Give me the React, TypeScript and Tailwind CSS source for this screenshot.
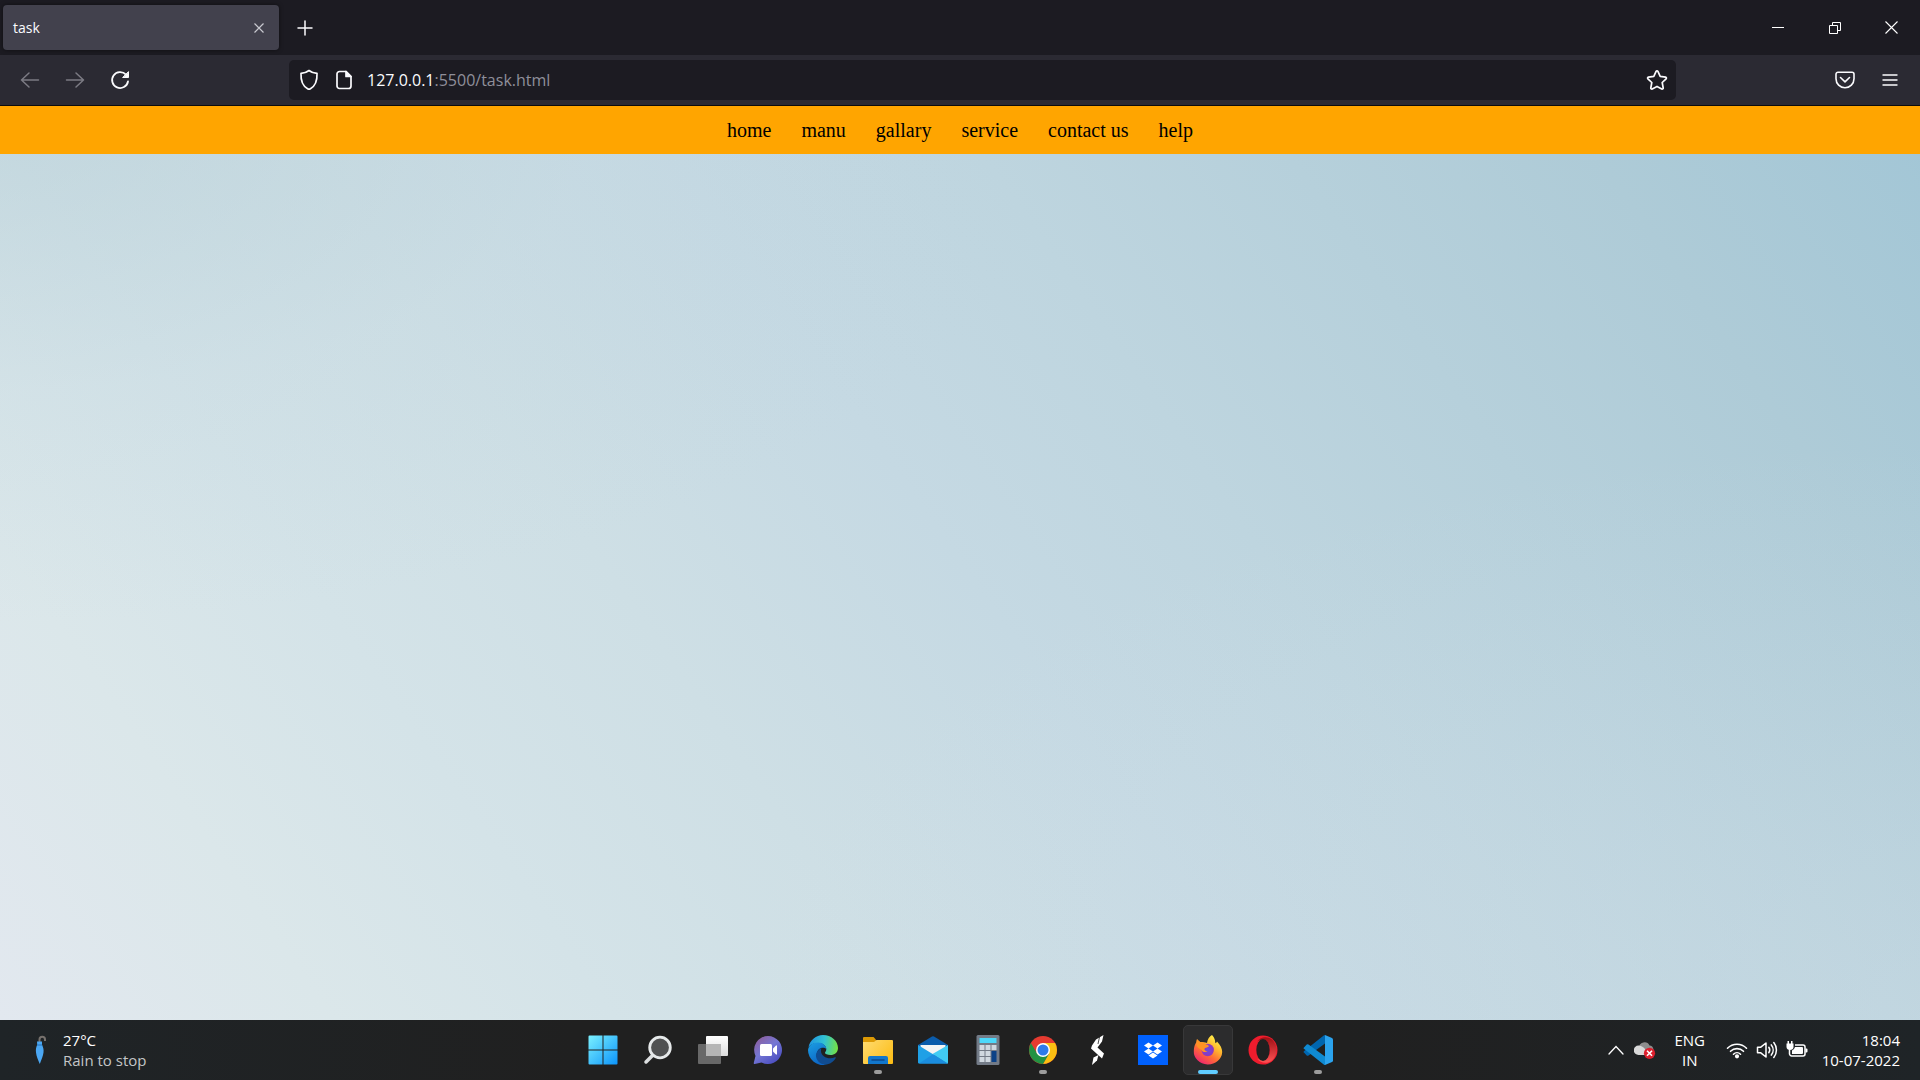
import React, { type ReactNode } from 'react';

function ShieldIcon() {
  return (
    <svg width="20" height="22" viewBox="0 0 20 22" fill="none" stroke="#fbfbfe" strokeWidth="1.7" strokeLinejoin="round">
      <path d="M10 1.500c2.200 1.700 5 2.700 8 2.900.3 6.600-1.700 12.600-6.600 15.400-.9.500-1.900.500-2.800 0C3.700 17 1.700 11 2 4.400 5 4.200 7.800 3.200 10 1.500Z" />
    </svg>
  );
}

function PageIcon() {
  return (
    <svg width="16" height="20" viewBox="0 0 16 20" fill="none" stroke="#fbfbfe" strokeWidth="1.700" strokeLinejoin="round">
      <path d="M10 1.500H3.500a2.500 2.500 0 0 0-2.500 2.500v12a2.500 2.500 0 0 0 2.500 2.500h9a2.500 2.500 0 0 0 2.500-2.500V6.500Z" />
      <path d="M10 1.500v5h5Z" fill="#fbfbfe" />
    </svg>
  );
}

function ArrowIcon({ right }: { right?: boolean }) {
  return (
    <svg width="20" height="20" viewBox="0 0 20 20" fill="none" stroke="#7c7b84" strokeWidth="1.500" strokeLinecap="round" strokeLinejoin="round">
      {right ? <path d="M1.500 10h17M11 3l7.500 7-7.500 7" /> : <path d="M18.500 10h-17M9 3l-7.500 7L9 17" />}
    </svg>
  );
}

function ReloadIcon() {
  return (
    <svg width="20" height="20" viewBox="0 0 20 20" fill="none" stroke="#fbfbfe" strokeWidth="1.800" strokeLinecap="round">
      <path d="M18 11.500A8 8 0 1 1 16 4.600" />
      <path d="M18.500 2v5.500H13Z" fill="#fbfbfe" strokeWidth="1" strokeLinejoin="round" />
    </svg>
  );
}

function StarIcon() {
  return (
    <svg width="22" height="22" viewBox="0 0 22 22" fill="none" stroke="#fbfbfe" strokeWidth="1.700" strokeLinejoin="round">
      <path d="M10.100 2.400a1 1 0 0 1 1.800 0l2.300 4.900 5.400.8a1 1 0 0 1 .5 1.700l-3.900 3.700 1 5.500a1 1 0 0 1-1.400 1L11 17.400 6.200 20a1 1 0 0 1-1.400-1l1-5.500L1.900 9.800a1 1 0 0 1 .5-1.700l5.400-.8Z" />
    </svg>
  );
}

function PocketIcon() {
  return (
    <svg width="20" height="18" viewBox="0 0 20 18" fill="none" stroke="#fbfbfe" strokeWidth="1.600" strokeLinecap="round" strokeLinejoin="round">
      <path d="M3 1.200h14a2 2 0 0 1 2 2v4.500a9 9 0 0 1-18 0V3.200a2 2 0 0 1 2-2Z" />
      <path d="m5.500 6.500 4.500 4.300 4.500-4.300" />
    </svg>
  );
}

function StartIcon() {
  return (
    <svg width="30" height="30" viewBox="0 0 30 30">
      <defs>
        <linearGradient id="win" x1="0" y1="0" x2="30" y2="30" gradientUnits="userSpaceOnUse">
          <stop stopColor="#7df3ff" />
          <stop offset="1" stopColor="#0a92fa" />
        </linearGradient>
      </defs>
      <path fill="url(#win)" d="M.500 1.500a1 1 0 0 1 1-1h13v14h-14ZM15.500.500h13a1 1 0 0 1 1 1v13h-14ZM.500 15.500h14v14h-13a1 1 0 0 1-1-1ZM15.500 15.500h14v13a1 1 0 0 1-1 1h-13Z" />
    </svg>
  );
}

function SearchIcon() {
  return (
    <svg width="30" height="30" viewBox="0 0 30 30">
      <path d="m10 20-7 7" stroke="#dcdfe0" strokeWidth="3.500" strokeLinecap="round" />
      <circle cx="17" cy="12.500" r="10.300" fill="#505152" stroke="#e6e9ea" strokeWidth="2.800" />
    </svg>
  );
}

function TaskViewIcon() {
  return (
    <svg width="30" height="30" viewBox="0 0 30 30">
      <defs>
        <linearGradient id="tv" x1="0" y1="0" x2="0" y2="1">
          <stop stopColor="#fff" />
          <stop offset="1" stopColor="#dcdcdc" />
        </linearGradient>
      </defs>
      <rect x="8" y="1" width="22" height="20" rx="1" fill="url(#tv)" />
      <rect y="9" width="23" height="20" rx="1" fill="#686868" />
      <path d="M8 9h15v12H8Z" fill="#b5b5b5" />
    </svg>
  );
}

function ChatIcon() {
  return (
    <svg width="30" height="30" viewBox="0 0 30 30">
      <defs>
        <linearGradient id="chat" x1="5" y1="3" x2="24" y2="28" gradientUnits="userSpaceOnUse">
          <stop stopColor="#8b5f9f" />
          <stop offset=".45" stopColor="#7577d4" />
          <stop offset="1" stopColor="#484bc0" />
        </linearGradient>
      </defs>
      <path fill="url(#chat)" d="M15 1a14 14 0 1 1-6.500 26.400L1.800 29a.9.9 0 0 1-1-1.200L2.500 21A14 14 0 0 1 15 1Z" />
      <rect x="7" y="9" width="12" height="12" rx="1.500" fill="#fff" />
      <path d="M20 13.500 23 10.500a.6.6 0 0 1 1 .500v8a.6.6 0 0 1-1 .500l-3-3Z" fill="#fff" />
    </svg>
  );
}

function EdgeIcon() {
  return (
    <svg width="30" height="30" viewBox="0 0 30 30">
      <defs>
        <linearGradient id="eg" x1="2" y1="10" x2="29" y2="14" gradientUnits="userSpaceOnUse">
          <stop stopColor="#2199e0" />
          <stop offset=".5" stopColor="#32c2d3" />
          <stop offset="1" stopColor="#73e047" />
        </linearGradient>
        <linearGradient id="eb" x1="0" y1="8" x2="12" y2="30" gradientUnits="userSpaceOnUse">
          <stop stopColor="#1b9de2" />
          <stop offset="1" stopColor="#0b63c4" />
        </linearGradient>
      </defs>
      <path d="M.5 12C2 5 8 0 15 0c8.500 0 15 6 15 13 0 4.500-3.500 7-7.500 7-3.200 0-5.500-.9-5.500-2.200 0-.9 1.300-1.500 1.300-3.600C18.300 11 15 8 10 8 5.500 8 2 10 .5 12Z" fill="url(#eg)" />
      <path d="M0 15C.5 10.500 4.500 7.500 10 7.500c5 0 8.300 3.500 8.300 6.500-2-2.500-8.800-2-9.500 5-.5 5 4 10 9.700 10.600A15 15 0 0 1 0 15Z" fill="url(#eb)" />
      <path d="M13.500 13c-3.500 1.500-6 5-5.500 8.500.6 5 6 9 11.500 7.800 3.500-.8 6.500-3.300 8.300-6.300.3-.6-.2-1-.8-.7-5.800 2.700-14-.3-14-6.300 0-1.200.1-2.200.5-3Z" fill="#104c91" />
    </svg>
  );
}

function ExplorerIcon() {
  return (
    <svg width="30" height="30" viewBox="0 0 30 30">
      <defs>
        <linearGradient id="fo" x1="0" y1="4" x2="28" y2="28" gradientUnits="userSpaceOnUse">
          <stop stopColor="#ffdc73" />
          <stop offset="1" stopColor="#fcbd17" />
        </linearGradient>
      </defs>
      <path d="M0 3a1 1 0 0 1 1-1h9.500L13 4.700V9H0Z" fill="#dd9a05" />
      <path d="M0 7h11l2.500-2H29a1 1 0 0 1 1 1v22a1 1 0 0 1-1 1H1a1 1 0 0 1-1-1Z" fill="url(#fo)" />
      <path d="M5 29v-6a2 2 0 0 1 2-2h16a2 2 0 0 1 2 2v6Z" fill="#1277cc" />
      <path d="M9 25h12" stroke="#0c498c" strokeWidth="1.500" strokeLinecap="round" />
    </svg>
  );
}

function MailIcon() {
  return (
    <svg width="30" height="30" viewBox="0 0 30 30">
      <path d="M0 10 14 1.500a2 2 0 0 1 2 0L30 10l-2 5H2Z" fill="#0b5cab" />
      <path d="M2.500 10h25v10h-25Z" fill="#f4f4f4" />
      <path d="M0 10l30 18.500H1a1 1 0 0 1-1-1Z" fill="#1fa0e6" />
      <path d="M30 10v17.500a1 1 0 0 1-1 1L14.500 19Z" fill="#41ccf4" />
      <path d="m15 19.200 15 9.300H1Z" fill="#1b8ddf" />
    </svg>
  );
}

function CalculatorIcon() {
  return (
    <svg width="30" height="30" viewBox="0 0 30 30">
      <rect x="3.500" width="23" height="30" rx="1.500" fill="#737b87" />
      <rect x="6.500" y="3" width="17" height="5" fill="#4cd8fa" />
      <path d="M6.500 10h5v5h-5ZM12.500 10h5v5h-5ZM18.500 10h5v5h-5ZM6.500 16h5v5h-5ZM12.500 16h5v5h-5ZM6.500 22h5v5h-5ZM12.500 22h5v5h-5Z" fill="#d0d8e0" />
      <path d="M18.500 16h5v11h-5Z" fill="#0c4287" />
    </svg>
  );
}

function ChromeIcon() {
  return (
    <svg width="30" height="30" viewBox="0 0 30 30">
      <circle cx="15" cy="15" r="14" fill="#e53a30" />
      <path d="M15 8h12.100A14 14 0 0 1 15 29l6.100-10.500Z" fill="#fbbf12" />
      <path d="M2.900 8A14 14 0 0 0 15 29l6.100-10.500h-12Z" fill="#229242" />
      <circle cx="15" cy="15" r="7" fill="#fff" />
      <circle cx="15" cy="15" r="5.500" fill="#2f7bea" />
    </svg>
  );
}

function BoltSIcon() {
  return (
    <svg width="30" height="30" viewBox="0 0 30 30" fill="#fff">
      <path d="M20.500 0 19 6.500l-4.500 6 6.500 6-2 5L8 13.500l1-3 4-6Z" />
      <path d="m15.500 20-1.500 5.500L9 30l1.500-7.500Z" />
      <path d="M16.500 2 15 9" stroke="#222" strokeWidth=".8" />
    </svg>
  );
}

function DropboxIcon() {
  return (
    <svg width="30" height="30" viewBox="0 0 30 30">
      <path d="M0 0h30v30H0Z" fill="#0061fe" />
      <path d="m10.500 7.500 4.500 3-4.500 3-4.500-3ZM19.500 7.500l4.500 3-4.500 3-4.500-3ZM10.500 13.500l4.500 3-4.500 3-4.500-3ZM19.500 13.500l4.500 3-4.500 3-4.500-3ZM15 17.500l4.500 3-4.500 3-4.500-3Z" fill="#fff" />
    </svg>
  );
}

function FirefoxIcon() {
  return (
    <svg width="30" height="30" viewBox="0 0 30 30">
      <defs>
        <linearGradient id="ff" x1="25" y1="3" x2="8" y2="28" gradientUnits="userSpaceOnUse">
          <stop stopColor="#fff14a" />
          <stop offset=".35" stopColor="#ffb52e" />
          <stop offset=".65" stopColor="#ff6b36" />
          <stop offset="1" stopColor="#f02a6c" />
        </linearGradient>
        <radialGradient id="fp">
          <stop stopColor="#6a4de0" />
          <stop offset="1" stopColor="#8f36bd" />
        </radialGradient>
      </defs>
      <path d="M19 0c1.500 1.500 2.500 3.500 3 5.500 0 1 .2 2 .5 2.800.8-.3 1.300-1 1.500-1.800 3.500 3.500 5.200 7 5.200 10.500a14.200 13 0 0 1-28.400-1C.8 12 2 9 3.500 7l.5-3 3 3c2.500 0 5 0 7 1 .5-4 2.500-6.500 5-8Z" fill="url(#ff)" />
      <circle cx="14.700" cy="15" r="6.200" fill="url(#fp)" />
      <path d="M3.800 4.500 7.500 7.300c2.300 0 4.500.5 5.500 2.200 2 .3 3.500 1.500 2.500 2.200-1.500.8-3.500.9-4 2-.4 1.500 1 2.500 3 2.600-2 1.500-5.500.7-6.500-1.800C5 13 2.500 11 3.800 4.500Z" fill="#ff9224" />
    </svg>
  );
}

function OperaIcon() {
  return (
    <svg width="30" height="30" viewBox="0 0 30 30">
      <defs>
        <linearGradient id="op" x1="0" y1="0" x2="0" y2="1">
          <stop stopColor="#9d0f14" />
          <stop offset="1" stopColor="#ff5354" />
        </linearGradient>
      </defs>
      <circle cx="15" cy="15" r="14.500" fill="#ee1c2d" />
      <path d="M9 6.500C13 1 20 1 24.500 5A14.500 14.500 0 0 1 24.500 25C20 29 13 29 9 23.500c7 4 13.500-2 13.500-8.500S16 2.500 9 6.500Z" fill="url(#op)" />
      <ellipse cx="15" cy="15" rx="6.700" ry="11" fill="#202020" />
    </svg>
  );
}

function CodeIcon() {
  return (
    <svg width="30" height="30" viewBox="0 0 30 30">
      <path d="m1.200 17.800 2.500 2.600a1.500 1.500 0 0 0 1.800.1L22 8.500V0a2 2 0 0 0-1.300.6L.9 16.200c-.5.500-.5 1.100.3 1.600Z" fill="#0066b0" />
      <path d="m1.200 12.200 2.500-2.600a1.500 1.500 0 0 1 1.800-.1L22 21.500V30a2 2 0 0 1-1.300-.6L.9 13.800c-.5-.5-.5-1.100.3-1.600Z" fill="#0f8ad2" />
      <path d="M22 0 29 3a1.800 1.800 0 0 1 1 1.600v20.800a1.800 1.800 0 0 1-1 1.600l-7 3Z" fill="#2ba3ee" />
    </svg>
  );
}

function UmbrellaIcon() {
  return (
    <svg width="12" height="30" viewBox="0 0 12 30">
      <path d="M4.500 7V4.500C4.500.8 10 .8 10 4.500V6" fill="none" stroke="#76716d" strokeWidth="2" />
      <path d="M2 6.500h5v3c1 2.500 2 5 1.500 8-.5 4-2 7-3.700 11.500C3 25 1.500 21.500 1 17.500c-.4-3 .2-5.500 1.200-8Z" fill="#4ba7f3" />
      <path d="M2 10h5" fill="none" stroke="#2573bd" />
    </svg>
  );
}

function CloudErrorIcon() {
  return (
    <svg width="22" height="18" viewBox="0 0 22 18">
      <path d="M5 7a5.500 5.500 0 0 1 10.500-2.500A4.500 4.500 0 0 1 17 13H5Z" fill="#8d8d8d" />
      <path d="M4.500 4.500C7 4.500 9 6 11 8l3 6H4.500a4.700 4.700 0 0 1 0-9.500Z" fill="#d9d9d9" />
      <circle cx="15.500" cy="12.300" r="5.600" fill="#dc1f2d" />
      <path d="m13 9.800 5 5m0-5-5 5" stroke="#fff" strokeWidth="1.600" />
    </svg>
  );
}

function WifiIcon() {
  return (
    <svg width="22" height="18" viewBox="0 0 22 18" fill="none" stroke="#fff" strokeWidth="1.600" strokeLinecap="round">
      <path d="M1.500 7.200a13.300 13.300 0 0 1 19 0M4.500 10.300a9.200 9.200 0 0 1 13 0M7.500 13.200a5 5 0 0 1 7 0" />
      <circle cx="11" cy="15.300" r="1.300" fill="#fff" />
    </svg>
  );
}

function VolumeIcon() {
  return (
    <svg width="22" height="18" viewBox="0 0 22 18" fill="none" stroke="#fff" strokeWidth="1.500" strokeLinecap="round" strokeLinejoin="round">
      <path d="M1.500 6.200v5.600h3.300L10 16V2L4.800 6.200Z" />
      <path d="M12.800 6.300a4.500 4.500 0 0 1 0 5.400M15.300 3.900a8 8 0 0 1 0 10.200M17.800 1.500a12 12 0 0 1 0 15" />
    </svg>
  );
}

function BatteryIcon() {
  return (
    <svg width="22" height="18" viewBox="0 0 22 18">
      <path d="M9 4h8a2 2 0 0 1 2 2v7a2 2 0 0 1-2 2H5.500A2.500 2.500 0 0 1 3.500 12V7" fill="none" stroke="#fff" strokeWidth="1.500" />
      <path d="M9 6h7a1 1 0 0 1 1 1v5a1 1 0 0 1-1 1H6V9.500l2-1.500ZM19.500 7.500h1a1 1 0 0 1 1 1v2a1 1 0 0 1-1 1h-1ZM1.500 0H3v2.500h2V0h1.500v2.500h1V6C7.500 8 6 9 4 9S.5 8 .5 6V2.500h1Z" fill="#fff" />
    </svg>
  );
}

type TaskbarApp = { name: string; icon: ReactNode; state?: 'open' | 'active' };

const apps: TaskbarApp[] = [
  { name: 'Start', icon: <StartIcon /> },
  { name: 'Search', icon: <SearchIcon /> },
  { name: 'Task View', icon: <TaskViewIcon /> },
  { name: 'Chat', icon: <ChatIcon /> },
  { name: 'Edge', icon: <EdgeIcon /> },
  { name: 'File Explorer', icon: <ExplorerIcon />, state: 'open' },
  { name: 'Mail', icon: <MailIcon /> },
  { name: 'Calculator', icon: <CalculatorIcon /> },
  { name: 'Chrome', icon: <ChromeIcon />, state: 'open' },
  { name: 'S', icon: <BoltSIcon /> },
  { name: 'Dropbox', icon: <DropboxIcon /> },
  { name: 'Firefox', icon: <FirefoxIcon />, state: 'active' },
  { name: 'Opera', icon: <OperaIcon /> },
  { name: 'Visual Studio Code', icon: <CodeIcon />, state: 'open' },
];

const links = ['home', 'manu', 'gallary', 'service', 'contact us', 'help'];

function TabStrip() {
  return (
    <header className="flex h-[55px] shrink-0 items-center bg-[#1c1b22] pl-[3px]">
      <div className="flex h-[45px] w-[276px] items-center justify-between rounded-[4px] bg-[#42414d] pr-2 pl-[10px] shadow-[0_0_4px_rgba(0,0,0,0.5)]">
        <span className="text-sm text-[#fbfbfe]">task</span>
        <button aria-label="Close tab" className="grid size-6 place-items-center">
          <svg width="10" height="10" viewBox="0 0 10 10" stroke="#c8c8cf" strokeWidth="1.200">
            <path d="m.5.5 9 9m0-9-9 9" />
          </svg>
        </button>
      </div>
      <button aria-label="New tab" className="ml-2 grid size-9 place-items-center">
        <svg width="16" height="16" viewBox="0 0 16 16" stroke="#fbfbfe" strokeWidth="1.500" strokeLinecap="round">
          <path d="M8 1v14M1 8h14" />
        </svg>
      </button>
      <div className="ml-auto flex h-full">
        <button aria-label="Minimize" className="grid w-[57px] place-items-center">
          <svg width="12" height="12" viewBox="0 0 12 12"><path d="M0 5h12v1H0Z" fill="#fff" /></svg>
        </button>
        <button aria-label="Restore" className="grid w-[57px] place-items-center">
          <svg width="12" height="12" viewBox="0 0 12 12" fill="none" stroke="#fff">
            <path d="M.5 3.500h8v8h-8ZM3.500 3.500v-3h8v8h-3" />
          </svg>
        </button>
        <button aria-label="Close" className="grid w-[57px] place-items-center">
          <svg width="13" height="13" viewBox="0 0 13 13" stroke="#fff" strokeWidth="1.100">
            <path d="m.5.5 12 12m0-12-12 12" />
          </svg>
        </button>
      </div>
    </header>
  );
}

function Toolbar() {
  return (
    <div className="flex h-[51px] shrink-0 items-center border-b border-[#0c0c0d] bg-[#2b2a33]">
      <div className="flex w-[289px] shrink-0 pl-[7px]">
        <button aria-label="Back" className="grid h-10 w-[45px] place-items-center"><ArrowIcon /></button>
        <button aria-label="Forward" className="grid h-10 w-[45px] place-items-center"><ArrowIcon right /></button>
        <button aria-label="Reload" className="grid h-10 w-[45px] place-items-center"><ReloadIcon /></button>
      </div>
      <div className="flex h-10 flex-1 items-center rounded-[5px] bg-[#1c1b22]">
        <button aria-label="Tracking protection" className="grid w-10 place-items-center"><ShieldIcon /></button>
        <button aria-label="Site information" className="grid w-[30px] place-items-center"><PageIcon /></button>
        <div role="textbox" aria-label="Address" tabIndex={0} className="ml-2 flex-1 text-base text-[#8f8f9a]">
          <span className="text-[#fbfbfe]">127.0.0.1</span>:5500/task.html
        </div>
        <button aria-label="Bookmark this page" className="grid w-[38px] place-items-center"><StarIcon /></button>
      </div>
      <div className="flex w-[244px] shrink-0 justify-end pr-2">
        <button aria-label="Save to Pocket" className="grid h-10 w-[45px] place-items-center"><PocketIcon /></button>
        <button aria-label="Menu" className="grid h-10 w-[45px] place-items-center">
          <svg width="16" height="14" viewBox="0 0 16 14" stroke="#fbfbfe" strokeWidth="1.400" strokeLinecap="round">
            <path d="M1 2h14M1 7h14M1 12h14" />
          </svg>
        </button>
      </div>
    </div>
  );
}

function Taskbar() {
  return (
    <footer className="grid h-[60px] shrink-0 grid-cols-[1fr_auto_1fr] items-center bg-[linear-gradient(90deg,#1f2427,#202020_30%,#202020_70%,#1f2427)] text-[15px] leading-5 text-white">
      <button className="flex items-center gap-4 pl-[35px] text-left">
        <UmbrellaIcon />
        <span>
          <span className="block">27°C</span>
          <span className="block text-[#c4c6c7]">Rain to stop</span>
        </span>
      </button>
      <div className="flex">
        {apps.map((app) => (
          <div key={app.name} className="grid h-[60px] w-[55px] place-items-center">
            <button
              aria-label={app.name}
              className={
                app.state === 'active'
                  ? 'relative grid size-[50px] place-items-center rounded-[5px] border border-[#383839] bg-[#2c2c2d]'
                  : 'relative grid size-[50px] place-items-center'
              }
            >
              {app.icon}
              {app.state === 'open' && <span className="absolute bottom-px h-1 w-2 rounded-full bg-[#9c9c9c]" />}
              {app.state === 'active' && <span className="absolute bottom-0 h-1 w-5 rounded-full bg-[#60cdff]" />}
            </button>
          </div>
        ))}
      </div>
      <div className="flex items-center justify-end pr-5">
        <button aria-label="Show hidden icons" className="grid w-6 place-items-center">
          <svg width="16" height="10" viewBox="0 0 16 10" fill="none" stroke="#fff" strokeWidth="1.300" strokeLinecap="round">
            <path d="m1 9 7-7.500L15 9" />
          </svg>
        </button>
        <button aria-label="OneDrive" className="ml-1.5"><CloudErrorIcon /></button>
        <button className="ml-4 w-9 text-center">
          <span className="block">ENG</span>
          <span className="block">IN</span>
        </button>
        <button aria-label="Network, volume and battery" className="ml-[18px] flex gap-2">
          <WifiIcon />
          <VolumeIcon />
          <BatteryIcon />
        </button>
        <button className="ml-3.5 text-right">
          <span className="block">18:04</span>
          <span className="block">10-07-2022</span>
        </button>
      </div>
    </footer>
  );
}

export default function App() {
  return (
    <div className="flex min-h-screen flex-col font-['Open_Sans','Noto_Sans',sans-serif]">
      <TabStrip />
      <Toolbar />
      <main className="flex flex-1 flex-col bg-[radial-gradient(ellipse_at_top_left,rgba(170,198,208,0.42),rgba(190,212,222,0.2)_22%,transparent_40%),radial-gradient(ellipse_at_bottom_right,rgba(220,228,236,0.3),transparent_45%),linear-gradient(55deg,#e2e8ef,#dbe7ea_13%,#d4e3e8_24%,#cedfe5_36%,#c5d9e3_50%,#bed5df_62%,#b6d0db_74%,#aecbd7_86%,#a2c6d6)]">
        <nav className="flex h-12 items-center justify-center gap-[30px] bg-[orange] font-['Liberation_Serif',serif] text-xl text-black">
          {links.map((label) => (
            <a key={label} href={'#' + label.replace(' ', '-')}>{label}</a>
          ))}
        </nav>
      </main>
      <Taskbar />
    </div>
  );
}
